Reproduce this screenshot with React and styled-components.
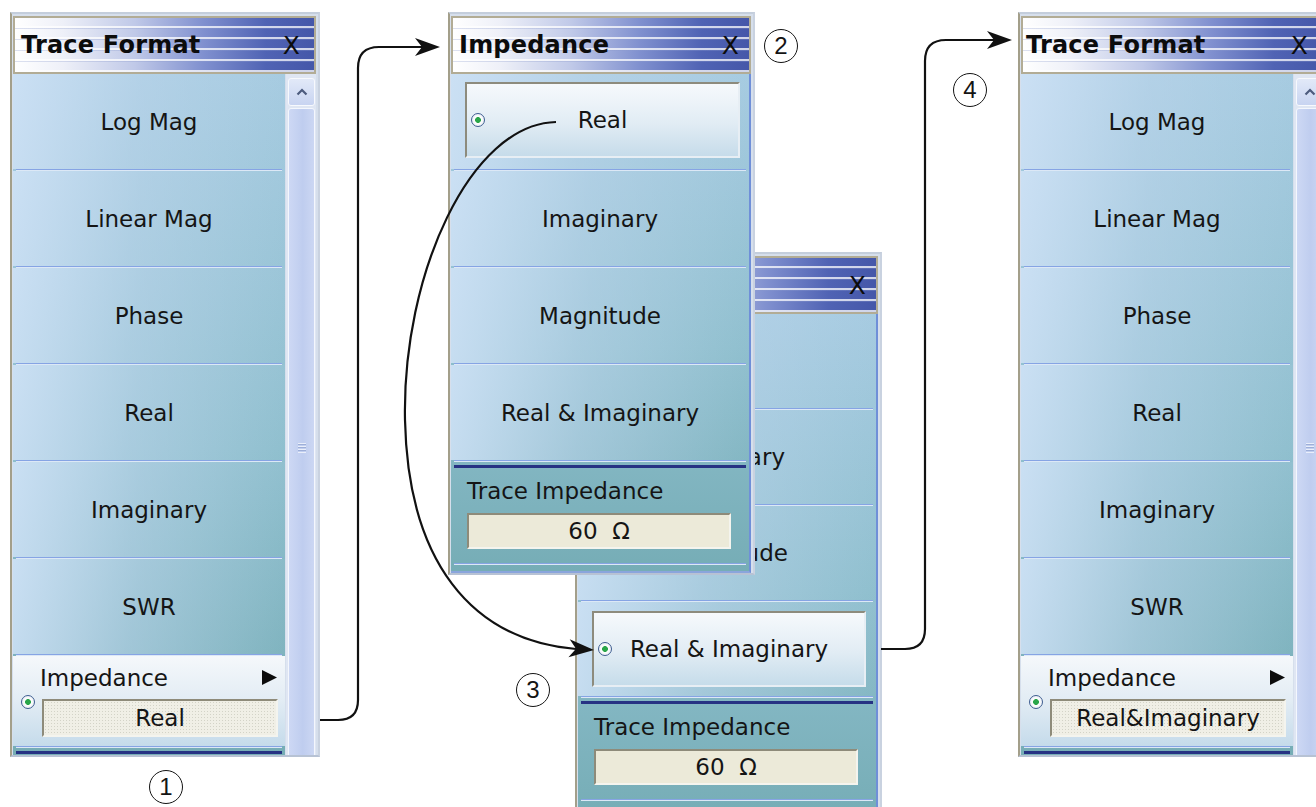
import React from "react";
import styled, { createGlobalStyle } from "styled-components";

const GlobalStyle = createGlobalStyle`
  html, body {
    margin: 0;
    padding: 0;
    background: #ffffff;
  }
  body {
    font-family: "DejaVu Sans", Verdana, sans-serif;
    color: #151515;
  }
`;

const Canvas = styled.div`
  position: relative;
  width: 1316px;
  height: 807px;
  overflow: hidden;
  background: #ffffff;
`;

// windows sit on a free canvas, so they are placed by coordinates
const Window = styled.div`
  position: absolute;
  left: ${(p) => p.$x}px;
  top: ${(p) => p.$y}px;
  width: ${(p) => p.$w}px;
  height: ${(p) => p.$h}px;
  z-index: ${(p) => p.$z || 1};
  box-sizing: border-box;
  display: flex;
  flex-direction: column;
  padding: 2px 2px 0 1px;
  background: #d6dfec;
  border-left: 2px solid #a39f8a;
  border-top: 2px solid #c4cedc;
  border-right: 2px solid #c9d2e0;
  border-bottom: 2px solid #b7c2d4;
  overflow: hidden;
`;

const TitleBar = styled.div`
  height: 58px;
  flex: none;
  box-sizing: border-box;
  display: flex;
  align-items: center;
  justify-content: space-between;
  padding: 0 ${(p) => p.$pr || 12}px 0 ${(p) => p.$pl || 6}px;
  border: 2px solid #b2ac95;
  background:
    repeating-linear-gradient(
      180deg,
      transparent 0 8px,
      rgba(255, 255, 255, 0.75) 8px 10px,
      rgba(140, 155, 205, 0.3) 10px 11px
    ),
    linear-gradient(
      90deg,
      #ffffff 0%,
      #eef0f8 16%,
      #c0c9e8 40%,
      #8090cf 63%,
      #5063b4 84%,
      #4557a9 100%
    );
`;

const TitleText = styled.span`
  font-weight: bold;
  font-size: 24px;
  color: #0c0c0c;
  letter-spacing: 0.2px;
`;

const CloseX = styled.span`
  font-size: 25px;
  color: #0c0c0c;
  font-family: "DejaVu Sans", sans-serif;
`;

const Body = styled.div`
  flex: 1;
  display: flex;
  gap: 1px;
  min-height: 0;
`;

const List = styled.div`
  ${(p) => (p.$w ? `width: ${p.$w}px; flex: none;` : "flex: 1;")}
  display: flex;
  flex-direction: column;
  background: linear-gradient(180deg, #a6cbe1 0%, #8fbfce 55%, #76adb6 100%);
  ${(p) => p.$edge && "border-right: 2px solid #6f8fd8; border-bottom: 2px solid #8aa5dc;"}
`;

const Cell = styled.div`
  height: ${(p) => p.$h || 95}px;
  flex: none;
  display: flex;
  align-items: center;
  justify-content: center;
  font-size: 23px;
  white-space: nowrap;
  background: linear-gradient(
    100deg,
    rgba(205, 225, 245, 0.95) 0%,
    rgba(190, 214, 236, 0.55) 45%,
    rgba(150, 195, 210, 0.05) 100%
  );
`;

const Rule = styled.div`
  height: 2px;
  flex: none;
  margin: 0 3px;
  background: linear-gradient(180deg, #86a4e4 50%, #dce8f6 50%);
`;

const NavyRule = styled.div`
  height: 3px;
  flex: none;
  margin: 3px 3px 0;
  background: #263283;
`;

const SelectedBox = styled.div`
  flex: 1;
  align-self: stretch;
  margin: ${(p) => p.$m};
  box-sizing: border-box;
  display: grid;
  grid-template-columns: 24px 1fr 24px;
  align-items: center;
  padding: 0 4px;
  border: 2px solid;
  border-color: #8d8b7d #e7eef4 #e7eef4 #8d8b7d;
  background: linear-gradient(180deg, #f6f9fc 0%, #e1ecf4 55%, #c6dcea 100%);
  font-size: 23px;
  span:nth-child(2) {
    text-align: center;
  }
`;

const Radio = styled.span`
  width: 14px;
  height: 14px;
  flex: none;
  box-sizing: border-box;
  border-radius: 50%;
  border: 1.5px solid #3e5d90;
  background: radial-gradient(circle, #2aa64a 0 2.6px, #ffffff 3.2px, #dde5ee 100%);
  margin-top: ${(p) => p.$mt || 0}px;
`;

const ImpSection = styled.div`
  height: 90px;
  flex: none;
  box-sizing: border-box;
  padding: 8px 7px 9px 8px;
  display: flex;
  flex-direction: column;
  gap: 8px;
  background: linear-gradient(180deg, #f5f8fb 0%, #e2ecf4 50%, #c5dbeb 100%);
`;

const ImpLabel = styled.div`
  height: 28px;
  display: flex;
  align-items: center;
  justify-content: space-between;
  padding-left: 19px;
  font-size: 23px;
`;

const FieldRow = styled.div`
  display: flex;
  align-items: flex-start;
  gap: 7px;
`;

const Field = styled.div`
  flex: 1;
  height: ${(p) => p.$h || 38}px;
  box-sizing: border-box;
  display: flex;
  align-items: center;
  justify-content: center;
  font-size: 23px;
  white-space: pre;
  background-color: #ecead9;
  ${(p) =>
    p.$dotted &&
    `background-color: #f0efe6;
     background-image: radial-gradient(rgba(110, 110, 90, 0.22) 0.7px, transparent 1px);
     background-size: 3px 3px;`}
  border: 2px solid;
  border-color: #8e8b7a #f4f4ee #f4f4ee #8e8b7a;
`;

const TraceSection = styled.div`
  flex: none;
  display: flex;
  flex-direction: column;
  gap: 8px;
  padding: 9px 18px 14px 16px;
  font-size: 23px;
`;

const TraceLabel = styled.div`
  height: 28px;
  line-height: 28px;
`;

const ScrollBar = styled.div`
  width: 30px;
  flex: none;
  box-sizing: border-box;
  display: flex;
  flex-direction: column;
  gap: 2px;
  padding: 4px 1px 0 2px;
  background: #dfe6f3;
`;

const ScrollUp = styled.div`
  height: 28px;
  flex: none;
  box-sizing: border-box;
  display: flex;
  align-items: center;
  justify-content: center;
  border: 1px solid #f7f9fd;
  border-radius: 3px;
  background: linear-gradient(180deg, #e2e9f8 0%, #c8d4f1 100%);
`;

const ScrollThumb = styled.div`
  height: 680px;
  flex: none;
  box-sizing: border-box;
  display: flex;
  align-items: center;
  justify-content: center;
  border: 1px solid #f4f7fd;
  border-radius: 3px;
  background: linear-gradient(90deg, #cdd8f4 0%, #bfcdef 55%, #ccd7f3 100%);
`;

const Grip = styled.div`
  width: 8px;
  height: 10px;
  background: repeating-linear-gradient(
    180deg,
    #e9eefa 0 1px,
    #9eafd8 1px 2px,
    transparent 2px 3px
  );
`;

const Badge = styled.div`
  position: absolute;
  left: ${(p) => p.$cx - 17}px;
  top: ${(p) => p.$cy - 17}px;
  width: 34px;
  height: 34px;
  box-sizing: border-box;
  border: 1.5px solid #141414;
  border-radius: 50%;
  display: flex;
  align-items: center;
  justify-content: center;
  font-family: "Liberation Sans", Arial, sans-serif;
  font-size: 24px;
  color: #141414;
  background: #ffffff;
  z-index: 12;
`;

const Overlay = styled.svg`
  position: absolute;
  left: 0;
  top: 0;
  width: 1316px;
  height: 807px;
  z-index: 11;
  pointer-events: none;
`;

const formats = ["Log Mag", "Linear Mag", "Phase", "Real", "Imaginary", "SWR"];
const impedances = ["Real", "Imaginary", "Magnitude", "Real & Imaginary"];

function Chevron() {
  return (
    <svg width="12" height="8" viewBox="0 0 12 8">
      <path d="M1.5 6.5 L6 2 L10.5 6.5" fill="none" stroke="#4d5b7e" strokeWidth="2.2" />
    </svg>
  );
}

function PlayArrow() {
  return (
    <svg width="17" height="17" viewBox="0 0 17 17">
      <path d="M1 1 L16 8.5 L1 16 Z" fill="#0c0c0c" />
    </svg>
  );
}

function TraceFormatWindow({ x, value, titlePad }) {
  return (
    <Window $x={x} $y={12} $w={310} $h={745}>
      <TitleBar $pl={titlePad} $pr={14}>
        <TitleText>Trace Format</TitleText>
        <CloseX>X</CloseX>
      </TitleBar>
      <Body>
        <List $w={272}>
          {formats.map((f) => (
            <React.Fragment key={f}>
              <Cell>{f}</Cell>
              <Rule />
            </React.Fragment>
          ))}
          <ImpSection>
            <ImpLabel>
              <span>Impedance</span>
              <PlayArrow />
            </ImpLabel>
            <FieldRow>
              <Radio $mt={-4} />
              <Field $dotted>{value}</Field>
            </FieldRow>
          </ImpSection>
          <Rule />
          <NavyRule />
        </List>
        <ScrollBar>
          <ScrollUp>
            <Chevron />
          </ScrollUp>
          <ScrollThumb>
            <Grip />
          </ScrollThumb>
        </ScrollBar>
      </Body>
    </Window>
  );
}

function ImpedanceWindow({ x, y, h, z, selected, cellH, boxMargin, title }) {
  return (
    <Window $x={x} $y={y} $w={307} $h={h} $z={z}>
      <TitleBar $pl={6} $pr={10}>
        <TitleText>{title}</TitleText>
        <CloseX>X</CloseX>
      </TitleBar>
      <Body>
        <List $edge>
          {impedances.map((item) => (
            <React.Fragment key={item}>
              <Cell $h={cellH}>
                {item === selected ? (
                  <SelectedBox $m={boxMargin}>
                    <Radio />
                    <span>{item}</span>
                    <span />
                  </SelectedBox>
                ) : (
                  item
                )}
              </Cell>
              <Rule />
            </React.Fragment>
          ))}
          <NavyRule />
          <TraceSection>
            <TraceLabel>Trace Impedance</TraceLabel>
            <FieldRow>
              <Field $h={36}>{"60  Ω"}</Field>
            </FieldRow>
          </TraceSection>
          <Rule />
        </List>
      </Body>
    </Window>
  );
}

function Head({ x, y, angle }) {
  return (
    <path
      d="M0 0 L-25 -9 L-18 0 L-25 9 Z"
      fill="#111111"
      transform={`translate(${x} ${y}) rotate(${angle})`}
    />
  );
}

function Connectors() {
  return (
    <Overlay viewBox="0 0 1316 807">
      <g fill="none" stroke="#111111" strokeWidth="2.2">
        <path d="M320 720 H338 Q358 720 358 700 V68 Q358 47 379 47 H424" />
        <path d="M556 122 C470 124 402 275 405 420 C408 560 470 640 576 649" />
        <path d="M881 649 H905 Q925 649 925 629 V61 Q925 40 946 40 H996" />
      </g>
      <Head x={440} y={47} angle={0} />
      <Head x={594} y={650} angle={4} />
      <Head x={1012} y={40} angle={0} />
    </Overlay>
  );
}

export default function App() {
  return (
    <>
      <GlobalStyle />
      <Canvas>
        <TraceFormatWindow x={10} value="Real" titlePad={6} />
        <ImpedanceWindow
          x={575}
          y={252}
          h={570}
          z={2}
          title=""
          selected="Real & Imaginary"
          cellH={94}
          boxMargin="9px 10px 9px 14px"
        />
        <ImpedanceWindow
          x={448}
          y={12}
          h={563}
          z={3}
          title="Impedance"
          selected="Real"
          cellH={95}
          boxMargin="8px 9px 11px 14px"
        />
        <TraceFormatWindow x={1018} value="Real&Imaginary" titlePad={3} />
        <Connectors />
        <Badge $cx={166} $cy={787}>1</Badge>
        <Badge $cx={781} $cy={46}>2</Badge>
        <Badge $cx={533} $cy={690}>3</Badge>
        <Badge $cx={970} $cy={90}>4</Badge>
      </Canvas>
    </>
  );
}
